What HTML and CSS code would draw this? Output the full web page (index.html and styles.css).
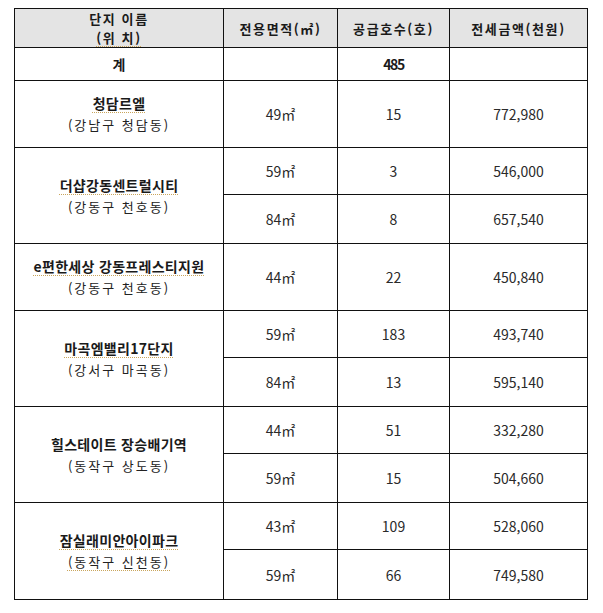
FILE: index.html
```html
<!DOCTYPE html>
<html lang="ko">
<head>
<meta charset="utf-8">
<title>공급 현황</title>
<link rel="stylesheet" href="styles.css">
</head>
<body>
<table class="grid">
  <colgroup>
    <col class="c-name">
    <col class="c-area">
    <col class="c-units">
    <col class="c-price">
  </colgroup>
  <thead>
    <tr class="r-head">
      <th><div class="hl">단지 이름</div><div class="hl"><span class="spell">(위 치)</span></div></th>
      <th>전용면적(㎡)</th>
      <th>공급호수(호)</th>
      <th>전세금액(천원)</th>
    </tr>
  </thead>
  <tbody>
    <tr class="r-total">
      <td class="total">계</td>
      <td></td>
      <td class="total sum">485</td>
      <td></td>
    </tr>
    <tr class="r-single">
      <td class="name"><div class="nm"><span class="spell">청담르엘</span></div><div class="loc">(강남구 청담동)</div></td>
      <td class="num">49㎡</td>
      <td class="num">15</td>
      <td class="num">772,980</td>
    </tr>
    <tr class="r-a">
      <td class="name" rowspan="2"><div class="nm"><span class="spell">더샵강동센트럴시티</span></div><div class="loc">(강동구 천호동)</div></td>
      <td class="num">59㎡</td>
      <td class="num">3</td>
      <td class="num">546,000</td>
    </tr>
    <tr class="r-b">
      <td class="num">84㎡</td>
      <td class="num">8</td>
      <td class="num">657,540</td>
    </tr>
    <tr class="r-single">
      <td class="name"><div class="nm"><span class="spell">e편한세상 강동프레스티지원</span></div><div class="loc">(강동구 천호동)</div></td>
      <td class="num">44㎡</td>
      <td class="num">22</td>
      <td class="num">450,840</td>
    </tr>
    <tr class="r-a">
      <td class="name" rowspan="2"><div class="nm"><span class="spell">마곡엠밸리17단지</span></div><div class="loc">(강서구 마곡동)</div></td>
      <td class="num">59㎡</td>
      <td class="num">183</td>
      <td class="num">493,740</td>
    </tr>
    <tr class="r-b">
      <td class="num">84㎡</td>
      <td class="num">13</td>
      <td class="num">595,140</td>
    </tr>
    <tr class="r-a">
      <td class="name" rowspan="2"><div class="nm">힐스테이트 장승배기역</div><div class="loc">(동작구 상도동)</div></td>
      <td class="num">44㎡</td>
      <td class="num">51</td>
      <td class="num">332,280</td>
    </tr>
    <tr class="r-b">
      <td class="num">59㎡</td>
      <td class="num">15</td>
      <td class="num">504,660</td>
    </tr>
    <tr class="r-a">
      <td class="name" rowspan="2"><div class="nm"><span class="spell">잠실래미안아이파크</span></div><div class="loc"><span class="spell">(동작구 신천동)</span></div></td>
      <td class="num">43㎡</td>
      <td class="num">109</td>
      <td class="num">528,060</td>
    </tr>
    <tr class="r-last">
      <td class="num">59㎡</td>
      <td class="num">66</td>
      <td class="num">749,580</td>
    </tr>
  </tbody>
</table>
</body>
</html>
```

FILE: styles.css
```css
html, body {
  margin: 0;
  padding: 0;
  background: #ffffff;
}

body {
  font-family: "Noto Sans CJK KR", "Noto Sans", sans-serif;
  color: #1a1a1a;
}

.grid {
  margin: 8px 0 0 14px;
  border-collapse: collapse;
  table-layout: fixed;
  width: 573px;
}

.c-name { width: 209px; }
.c-area { width: 114px; }
.c-units { width: 112px; }
.c-price { width: 138px; }

.grid th,
.grid td {
  border: 1px solid #111;
  padding: 0;
  text-align: center;
  vertical-align: middle;
}

.grid th {
  background: #e4e4e4;
  font-size: 13px;
  font-weight: 700;
  letter-spacing: 1.6px;
  line-height: 19px;
  color: #1a1a1a;
}

.r-head { height: 38px; }
.r-total { height: 33px; }
.r-single { height: 67px; }
.r-a { height: 47px; }
.r-b { height: 49px; }
.r-last { height: 50px; }

.total {
  font-size: 14px;
  font-weight: 700;
}

.sum {
  letter-spacing: -1.5px;
}

.name {
  line-height: 22px;
}

.nm {
  font-size: 14px;
  font-weight: 700;
  letter-spacing: 0.3px;
}

.loc {
  font-size: 13px;
  letter-spacing: 2px;
  color: #222;
}

.num {
  font-size: 14px;
  color: #2a2a2a;
}

.spell {
  text-decoration: underline dotted #c9a55c;
  text-decoration-thickness: 1px;
  text-underline-offset: 3px;
}
```
